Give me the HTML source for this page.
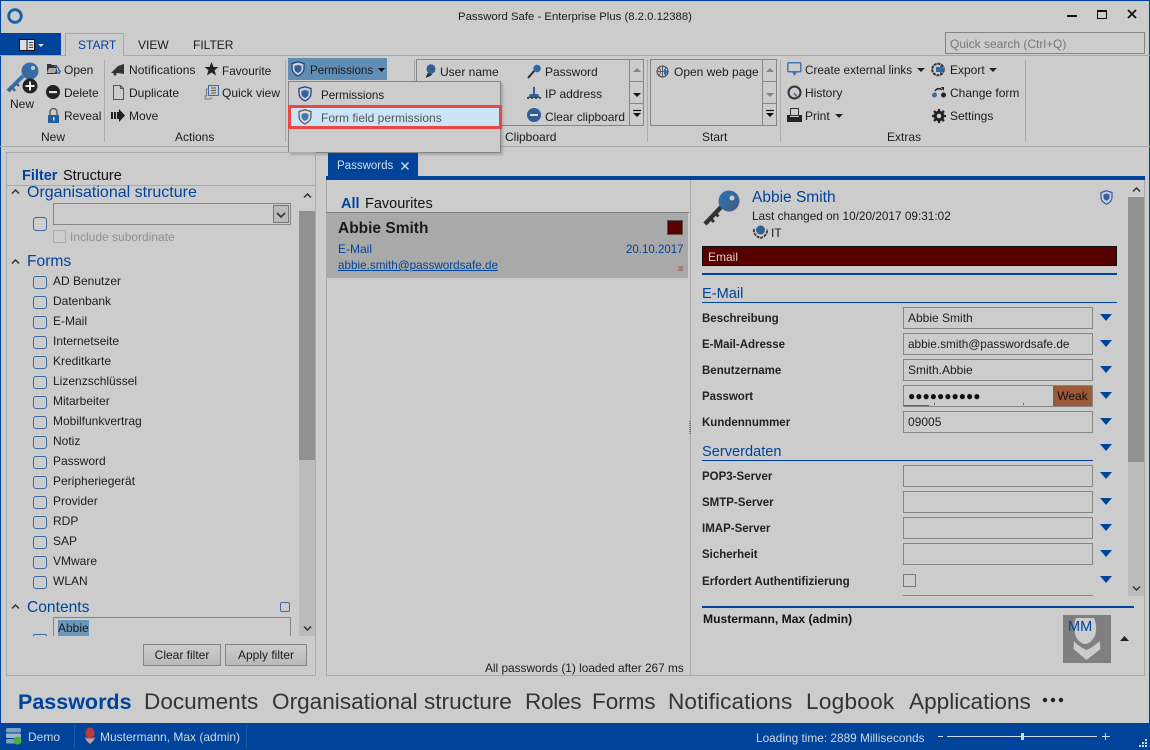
<!DOCTYPE html>
<html><head><meta charset="utf-8"><title>Password Safe</title>
<style>
html,body{margin:0;padding:0;width:1150px;height:750px;overflow:hidden;background:#ccc}
body{position:relative;font-family:"Liberation Sans",sans-serif;font-size:12px;color:#1c1c1c}
.t{position:absolute;white-space:nowrap;line-height:16px}
.b{position:absolute;box-sizing:border-box}
svg{position:absolute;overflow:visible}
.blue{color:#00439a}
.h{font-size:15.6px;color:#00439a;line-height:18px}
.cb{position:absolute;box-sizing:border-box;width:14px;height:13px;border:1.5px solid #3d6a9c;border-radius:3px}
.inp{position:absolute;box-sizing:border-box;left:903px;width:190px;height:22px;border:1px solid #858585;padding-left:4px;line-height:20px;white-space:nowrap}
.lab{position:absolute;left:702px;line-height:16px;font-weight:bold;font-size:11.5px;color:#222;white-space:nowrap}
.nav{position:absolute;top:687px;font-size:22.6px;line-height:30px;color:#33333a;white-space:nowrap}
.tri{position:absolute;left:1100px;width:0;height:0;border-left:6px solid transparent;border-right:6px solid transparent;border-top:7px solid #00439a}
.sep{position:absolute;width:1px;top:60px;height:82px;background:#aaa}
</style></head><body>

<!-- window frame -->
<div class="b" style="left:0;top:0;width:1150px;height:1px;background:#00439a"></div>
<div class="b" style="left:0;top:0;width:1px;height:750px;background:#00439a"></div>
<div class="b" style="left:1149px;top:0;width:1px;height:750px;background:#00439a"></div>

<svg style="left:7px;top:8px" width="16" height="16"><circle cx="8" cy="8" r="6.300" fill="none" stroke="#1b5f9c" stroke-width="2.800"/></svg>
<div class="t" style="left:458px;top:9px;font-size:11.35px">Password Safe - Enterprise Plus (8.2.0.12388)</div>
<div class="b" style="left:1067px;top:15px;width:10px;height:2px;background:#111"></div>
<div class="b" style="left:1097px;top:10px;width:10px;height:9px;border:1px solid #111;border-top-width:2px"></div>
<svg style="left:1127px;top:9px" width="10" height="10"><path d="M1 1L9 9M9 1L1 9" stroke="#111" stroke-width="1.800"/></svg>

<!-- menu -->
<div class="b" style="left:0;top:33px;width:61px;height:22px;background:#00439a"></div>
<svg style="left:19px;top:39px" width="26" height="13"><rect x=".5" y=".5" width="15" height="11" fill="#ddd" stroke="#111"/><path d="M8 .5V11.500" stroke="#111"/><path d="M10 3.500h4M10 6h4M10 8.500h4" stroke="#111" stroke-width=".8"/><path d="M19 5h6l-3 3z" fill="#ddd"/></svg>
<div class="b" style="left:0;top:55px;width:1150px;height:1px;background:#a8a8a8"></div>
<div class="b" style="left:65px;top:33px;width:59px;height:23px;border:1px solid #a8a8a8;border-bottom:0;background:#ccc"></div>
<div class="t blue" style="left:78px;top:37px">START</div>
<div class="t" style="left:138px;top:37px">VIEW</div>
<div class="t" style="left:193px;top:37px">FILTER</div>
<div class="b" style="left:945px;top:32px;width:200px;height:22px;border:1px solid #858585"></div>
<div class="t" style="left:950px;top:36px;color:#777">Quick search (Ctrl+Q)</div>
<div class="b" style="left:0;top:146px;width:1150px;height:1px;background:#a8a8a8"></div>

<!-- ribbon separators -->
<div class="sep" style="left:104px"></div><div class="sep" style="left:285px"></div><div class="sep" style="left:414px"></div>
<div class="sep" style="left:647px"></div><div class="sep" style="left:780px"></div><div class="sep" style="left:1025px"></div>

<!-- New group -->
<svg style="left:7px;top:62px" width="32" height="34"><defs><linearGradient id="k" x1="0" y1="1" x2="1" y2="0"><stop offset="0" stop-color="#40648c"/><stop offset="1" stop-color="#2f74bb"/></linearGradient></defs><path d="M1 29L16 14" stroke="url(#k)" stroke-width="4"/><path d="M5 25l3 4M9 21l3 3" stroke="#40648c" stroke-width="2.500"/><circle cx="23" cy="9" r="8.500" fill="url(#k)"/><circle cx="26" cy="6" r="2" fill="#ccc"/><circle cx="23" cy="24" r="7.500" fill="#222"/><path d="M23 19.500v9M18.500 24h9" stroke="#eee" stroke-width="2"/></svg>
<div class="t" style="left:10px;top:96px">New</div>
<svg style="left:46px;top:62px" width="15" height="15"><path d="M1 2h4l1 1h5v9H1z" fill="#333"/><path d="M3 6h8l-2 5H1z" fill="#aaa"/><path d="M8 4c3 0 5 2 5 5M10.500 9.500l2.500 2 1.500-3" fill="none" stroke="#3d6a9c" stroke-width="1.400"/></svg>
<div class="t" style="left:64px;top:62px">Open</div>
<svg style="left:46px;top:85px" width="15" height="15"><circle cx="7" cy="7" r="7" fill="#222"/><rect x="3" y="6" width="8" height="2.200" fill="#ddd"/></svg>
<div class="t" style="left:64px;top:85px">Delete</div>
<svg style="left:47px;top:108px" width="13" height="15"><path d="M3 7V4a3.500 3.500 0 0 1 7 0v3" fill="none" stroke="#555" stroke-width="1.300"/><rect x="1" y="7" width="11" height="8" fill="#1f5f9e"/><rect x="6" y="9" width="1.500" height="3.500" fill="#ddd"/></svg>
<div class="t" style="left:64px;top:108px">Reveal</div>
<div class="t" style="left:41px;top:129px">New</div>

<!-- Actions -->
<svg style="left:110px;top:63px" width="16" height="13"><path d="M1 10L8 3l6-2v10l-6-1H2z" fill="#333"/><circle cx="5" cy="11" r="1.500" fill="#333"/></svg>
<div class="t" style="left:129px;top:62px;letter-spacing:.1px">Notifications</div>
<svg style="left:204px;top:62px" width="15" height="14"><path d="M7.500 0l2 5h5l-4 3.300 1.600 5.200-4.600-3-4.600 3L4.500 8.300.5 5h5z" fill="#222"/></svg>
<div class="t" style="left:222px;top:63px;font-size:11.8px">Favourite</div>
<svg style="left:113px;top:85px" width="11" height="15"><path d="M.5.500h7l3 3v11H.5z" fill="#ccc" stroke="#555"/><path d="M7.500.500v3h3" fill="none" stroke="#555"/></svg>
<div class="t" style="left:129px;top:85px">Duplicate</div>
<svg style="left:204px;top:85px" width="15" height="15"><rect x="4.500" y=".5" width="10" height="10" fill="none" stroke="#3d6a9c"/><path d="M7 3h5M7 5.500h5M7 8h5" stroke="#555"/><path d="M4 4H2.500v7H1v3h6v-2" fill="none" stroke="#777"/></svg>
<div class="t" style="left:222px;top:85px">Quick view</div>
<svg style="left:111px;top:109px" width="14" height="13"><path d="M0 3h2v7H0zM3 3h2v7H3zM6 3h2V0l6 6.500L8 13v-3H6z" fill="#222"/></svg>
<div class="t" style="left:129px;top:108px">Move</div>
<div class="t" style="left:175px;top:129px">Actions</div>

<!-- Clipboard gallery -->
<div class="b" style="left:416px;top:59px;width:228px;height:67px;border:1px solid #858585"></div>
<div class="b" style="left:629px;top:59px;width:1px;height:67px;background:#858585"></div>
<div class="b" style="left:629px;top:81px;width:15px;height:1px;background:#858585"></div>
<div class="b" style="left:629px;top:103px;width:15px;height:1px;background:#858585"></div>
<svg style="left:424px;top:64px" width="13" height="15"><ellipse cx="7" cy="5" rx="4.500" ry="4.800" fill="#2f5f94"/><path d="M1.500 14l2-5 5 1-2 2z" fill="#333"/></svg>
<div class="t" style="left:440px;top:64px">User name</div>
<svg style="left:527px;top:64px" width="14" height="15"><path d="M1 14L8 6" stroke="#333" stroke-width="2"/><circle cx="10" cy="4.500" r="3.800" fill="#2f6aa8"/></svg>
<div class="t" style="left:545px;top:64px">Password</div>
<svg style="left:527px;top:87px" width="14" height="13"><path d="M7 0v7" stroke="#2f5f94" stroke-width="2"/><path d="M3 7h8l2 4H1z" fill="#2f5f94"/><path d="M0 11h14" stroke="#222" stroke-dasharray="2 2" stroke-width="1.500"/></svg>
<div class="t" style="left:545px;top:86px">IP address</div>
<svg style="left:527px;top:108px" width="14" height="14"><circle cx="7" cy="7" r="7" fill="#2f5f94"/><rect x="3" y="6" width="8" height="2" fill="#ddd"/></svg>
<div class="t" style="left:545px;top:109px;font-size:11.9px">Clear clipboard</div>
<svg style="left:632px;top:67px" width="10" height="50"><path d="M1 5l4-4 4 4z" fill="#858585"/><path d="M1 26h8l-4 4z" fill="#111"/><path d="M1 46h8l-4 4z" fill="#111"/><path d="M1 43.500h8" stroke="#111" stroke-width="1.200"/></svg>
<div class="t" style="left:505px;top:129px">Clipboard</div>

<!-- Start gallery -->
<div class="b" style="left:650px;top:59px;width:127px;height:67px;border:1px solid #858585"></div>
<div class="b" style="left:762px;top:59px;width:1px;height:67px;background:#858585"></div>
<div class="b" style="left:762px;top:81px;width:15px;height:1px;background:#858585"></div>
<div class="b" style="left:762px;top:103px;width:15px;height:1px;background:#858585"></div>
<svg style="left:656px;top:65px" width="14" height="14"><circle cx="6.500" cy="6.500" r="5.500" fill="#ccc" stroke="#444"/><path d="M6.500 1v11M1 6.500h11M3 2.500c2 3 2 5 0 8M10 2.500c-2 3-2 5 0 8" fill="none" stroke="#444" stroke-width=".8"/><path d="M8 4l5 3-5 3z" fill="#2f6aa8"/></svg>
<div class="t" style="left:674px;top:64px">Open web page</div>
<svg style="left:765px;top:67px" width="10" height="50"><path d="M1 5l4-4 4 4z" fill="#858585"/><path d="M1 26h8l-4 4z" fill="#858585"/><path d="M1 46h8l-4 4z" fill="#111"/><path d="M1 43.500h8" stroke="#111" stroke-width="1.200"/></svg>
<div class="t" style="left:702px;top:129px">Start</div>

<!-- Extras -->
<svg style="left:787px;top:62px" width="15" height="15"><rect x=".8" y=".8" width="13" height="9" rx="1" fill="none" stroke="#3d7ab8" stroke-width="1.500"/><path d="M5 10h5l-2.500 4z" fill="#3d7ab8"/></svg>
<div class="t" style="left:805px;top:63px;font-size:11.75px">Create external links</div>
<svg style="left:917px;top:68px" width="8" height="4"><path d="M0 0h8L4 4z" fill="#222"/></svg>
<svg style="left:787px;top:85px" width="15" height="15"><circle cx="7.500" cy="7.500" r="6" fill="none" stroke="#333" stroke-width="2"/><path d="M7 8l4 5" stroke="#3d6a9c" stroke-width="1.500"/></svg>
<div class="t" style="left:805px;top:85px">History</div>
<svg style="left:787px;top:108px" width="15" height="14"><rect x="3.500" y=".5" width="8" height="7" fill="#ccc" stroke="#333"/><path d="M0 7h3v2h9V7h3v7H0z" fill="#222"/></svg>
<div class="t" style="left:805px;top:108px">Print</div>
<svg style="left:835px;top:114px" width="8" height="4"><path d="M0 0h8L4 4z" fill="#222"/></svg>
<svg style="left:931px;top:62px" width="15" height="15"><circle cx="7" cy="7.500" r="5.800" fill="none" stroke="#333" stroke-width="2" stroke-dasharray="3 .8"/><path d="M5 5h4V3l5 4.500L9 12v-2H5z" fill="#2f6aa8"/></svg>
<div class="t" style="left:950px;top:62px">Export</div>
<svg style="left:989px;top:68px" width="8" height="4"><path d="M0 0h8L4 4z" fill="#222"/></svg>
<svg style="left:932px;top:86px" width="14" height="12"><circle cx="2.500" cy="9" r="2.500" fill="#3d6a9c"/><circle cx="11.500" cy="9" r="2.500" fill="#222"/><path d="M3 5c2-3 5-3 7-1" fill="none" stroke="#222" stroke-width="1.500"/><path d="M9 1l3 0 0 4z" fill="#222"/></svg>
<div class="t" style="left:950px;top:85px">Change form</div>
<svg style="left:932px;top:109px" width="14" height="14"><circle cx="7" cy="7" r="3.800" fill="none" stroke="#222" stroke-width="3"/><path d="M7 0v14M0 7h14M2 2l10 10M12 2L2 12" stroke="#222" stroke-width="2.300" stroke-dasharray="2.500 9 2.500 0"/></svg>
<div class="t" style="left:950px;top:108px">Settings</div>
<div class="t" style="left:887px;top:129px">Extras</div>

<!-- Permissions -->
<div class="b" style="left:288px;top:58px;width:99px;height:22px;background:#5f8db3"></div>
<svg style="left:291px;top:61px" width="14" height="16"><path d="M7 .8l6 1.700v5c0 4-3 6-6 7.500-3-1.500-6-3.500-6-7.500v-5z" fill="#ccd" stroke="#1d3f6e" stroke-width="1.200"/><path d="M7 4l3.500 1v2.500C10.500 10 9 11 7 12c-2-1-3.500-2-3.500-4.500V5z" fill="#2f5f9e"/></svg>
<div class="t" style="left:310px;top:63px;font-size:11.6px">Permissions</div>
<svg style="left:378px;top:68px" width="7" height="4"><path d="M0 0h7L3.500 4z" fill="#111"/></svg>

<div class="b" style="left:288px;top:81px;width:213px;height:72px;background:#ccc;border:1px solid #858585;box-shadow:2px 2px 2px rgba(0,0,0,.18)"></div>
<svg style="left:298px;top:86px" width="14" height="16"><path d="M7 .8l6 1.700v5c0 4-3 6-6 7.500-3-1.500-6-3.500-6-7.500v-5z" fill="#ccd" stroke="#1d3f6e" stroke-width="1.200"/><path d="M7 4l3.500 1v2.500C10.500 10 9 11 7 12c-2-1-3.500-2-3.500-4.500V5z" fill="#2f5f9e"/></svg>
<div class="t" style="left:321px;top:88px;font-size:11.6px">Permissions</div>
<div class="b" style="left:288px;top:105px;width:214px;height:24px;background:#cce4f7;border:3px solid #e8483f"></div>
<svg style="left:298px;top:109px" width="14" height="16"><path d="M7 .8l6 1.700v5c0 4-3 6-6 7.500-3-1.500-6-3.500-6-7.500v-5z" fill="#ddd" stroke="#555" stroke-width="1.200"/><path d="M7 4l3.500 1v2.500C10.500 10 9 11 7 12c-2-1-3.500-2-3.500-4.500V5z" fill="#3d78bb"/></svg>
<div class="t" style="left:321px;top:110px;color:#555">Form field permissions</div>

<!-- Left panel -->
<div class="b" style="left:6px;top:152px;width:310px;height:524px;border:1px solid #aaa"></div>
<div class="b" style="left:7px;top:185px;width:308px;height:1px;background:#aaa"></div>
<div class="t" style="left:22px;top:167px;font-size:14.500px;font-weight:bold;color:#00439a;line-height:18px">Filter</div>
<div class="t" style="left:63px;top:167px;font-size:14.500px;color:#111;line-height:18px">Structure</div>

<div class="b" style="left:299px;top:186px;width:16px;height:450px;background:#bbb"></div>
<div class="b" style="left:299px;top:186px;width:16px;height:25px;background:#ccc"></div>
<div class="b" style="left:299px;top:211px;width:16px;height:249px;background:#909090"></div>
<svg style="left:303px;top:193px" width="9" height="5"><path d="M1 4.500L4.500 1 8 4.500" fill="none" stroke="#333" stroke-width="1.500"/></svg>
<svg style="left:303px;top:626px" width="9" height="5"><path d="M1 .5L4.500 4 8 .5" fill="none" stroke="#333" stroke-width="1.500"/></svg>

<svg style="left:11px;top:189px" width="9" height="5"><path d="M1 4.500L4.500 1 8 4.500" fill="none" stroke="#333" stroke-width="1.500"/></svg>
<div class="t h" style="left:27px;top:185px;font-size:16px;line-height:15px;height:15px">Organisational structure</div>
<div class="cb" style="left:33px;top:217px;height:14px"></div>
<div class="b" style="left:53px;top:203px;width:238px;height:22px;border:1px solid #858585"></div>
<div class="b" style="left:273px;top:205px;width:16px;height:18px;border:1px solid #777;background:#bbb"></div>
<svg style="left:276px;top:212px" width="10" height="6"><path d="M1 1l4 4 4-4" fill="none" stroke="#333" stroke-width="1.600"/></svg>
<div class="b" style="left:53px;top:230px;width:13px;height:13px;border:1px solid #aaa"></div>
<div class="t" style="left:70px;top:229px;color:#8f8f8f">Include subordinate</div>

<svg style="left:11px;top:259px" width="9" height="5"><path d="M1 4.500L4.500 1 8 4.500" fill="none" stroke="#333" stroke-width="1.500"/></svg>
<div class="t h" style="left:27px;top:253px">Forms</div>

<div class="cb" style="left:33px;top:276px"></div><div class="t" style="left:53px;top:273px">AD Benutzer</div>
<div class="cb" style="left:33px;top:296px"></div><div class="t" style="left:53px;top:293px">Datenbank</div>
<div class="cb" style="left:33px;top:316px"></div><div class="t" style="left:53px;top:313px">E-Mail</div>
<div class="cb" style="left:33px;top:336px"></div><div class="t" style="left:53px;top:333px">Internetseite</div>
<div class="cb" style="left:33px;top:356px"></div><div class="t" style="left:53px;top:353px">Kreditkarte</div>
<div class="cb" style="left:33px;top:376px"></div><div class="t" style="left:53px;top:373px">Lizenzschlüssel</div>
<div class="cb" style="left:33px;top:396px"></div><div class="t" style="left:53px;top:393px">Mitarbeiter</div>
<div class="cb" style="left:33px;top:416px"></div><div class="t" style="left:53px;top:413px">Mobilfunkvertrag</div>
<div class="cb" style="left:33px;top:436px"></div><div class="t" style="left:53px;top:433px">Notiz</div>
<div class="cb" style="left:33px;top:456px"></div><div class="t" style="left:53px;top:453px">Password</div>
<div class="cb" style="left:33px;top:476px"></div><div class="t" style="left:53px;top:473px">Peripheriegerät</div>
<div class="cb" style="left:33px;top:496px"></div><div class="t" style="left:53px;top:493px">Provider</div>
<div class="cb" style="left:33px;top:516px"></div><div class="t" style="left:53px;top:513px">RDP</div>
<div class="cb" style="left:33px;top:536px"></div><div class="t" style="left:53px;top:533px">SAP</div>
<div class="cb" style="left:33px;top:556px"></div><div class="t" style="left:53px;top:553px">VMware</div>
<div class="cb" style="left:33px;top:576px"></div><div class="t" style="left:53px;top:573px">WLAN</div>

<svg style="left:11px;top:604px" width="9" height="5"><path d="M1 4.500L4.500 1 8 4.500" fill="none" stroke="#333" stroke-width="1.500"/></svg>
<div class="t h" style="left:27px;top:599px">Contents</div>
<div class="b" style="left:280px;top:602px;width:10px;height:10px;border:1px solid #3d6a9c;border-radius:2px"></div>
<div class="b" style="left:53px;top:617px;width:238px;height:19px;border:1px solid #858585;border-bottom:0"></div>
<div class="b" style="left:58px;top:620px;width:31px;height:16px;background:#6a97bb"></div>
<div class="t" style="left:58px;top:620px">Abbie</div>
<div class="b" style="left:33px;top:634px;width:14px;height:2px;border:1.500px solid #3d6a9c;border-bottom:0;border-radius:3px 3px 0 0"></div>

<div class="b" style="left:143px;top:644px;width:78px;height:22px;border:1px solid #858585;background:linear-gradient(#ccc,#b9b9b9);text-align:center;line-height:20px">Clear filter</div>
<div class="b" style="left:225px;top:644px;width:82px;height:22px;border:1px solid #858585;background:linear-gradient(#ccc,#b9b9b9);text-align:center;line-height:20px">Apply filter</div>

<!-- Tab & centre -->
<div class="b" style="left:328px;top:153px;width:90px;height:24px;background:#00439a"></div>
<div class="t" style="left:337px;top:158px;color:#d5dfe9;font-size:11.500px">Passwords</div>
<svg style="left:401px;top:162px" width="8" height="8"><path d="M.5.5l7 7M7.500.5l-7 7" stroke="#d5dfe9" stroke-width="1.300"/></svg>
<div class="b" style="left:326px;top:176px;width:819px;height:4px;background:#00439a"></div>
<div class="b" style="left:326px;top:180px;width:819px;height:496px;border:1px solid #aaa;border-top:0"></div>

<div class="t" style="left:341px;top:195px;font-size:14.500px;font-weight:bold;color:#00439a;line-height:18px">All</div>
<div class="t" style="left:365px;top:195px;font-size:14.500px;color:#111;line-height:18px">Favourites</div>
<div class="b" style="left:326px;top:212px;width:363px;height:1px;background:#808080"></div>
<div class="b" style="left:326px;top:213px;width:362px;height:65px;background:#a9a9a9"></div>
<div class="t" style="left:338px;top:220px;font-size:15.500px;font-weight:bold;line-height:18px;color:#1a1a1a">Abbie Smith</div>
<div class="b" style="left:667px;top:220px;width:16px;height:15px;background:#5a0000;border:1px solid #555"></div>
<div class="t blue" style="left:338px;top:241px">E-Mail</div>
<div class="t blue" style="left:626px;top:242px;font-size:11.500px">20.10.2017</div>
<div class="t blue" style="left:338px;top:258px;text-decoration:underline;font-size:11.7px">abbie.smith@passwordsafe.de</div>
<div class="b" style="left:678px;top:266px;width:5px;height:5px;background:#a88070"></div>
<div class="t" style="left:485px;top:660px;font-size:11.85px">All passwords (1) loaded after 267 ms</div>

<div class="b" style="left:690px;top:180px;width:1px;height:495px;background:#aaa"></div>
<div class="b" style="left:689px;top:421px;width:2px;height:14px;background:repeating-linear-gradient(#777 0 1px,transparent 1px 2px)"></div>

<!-- Detail -->
<svg style="left:703px;top:190px" width="38" height="38"><defs><linearGradient id="k2" x1="0" y1="0" x2="1" y2="1"><stop offset="0" stop-color="#2f74bb"/><stop offset="1" stop-color="#40587a"/></linearGradient></defs><path d="M2 34L20 15" stroke="#333" stroke-width="4.500"/><path d="M7 28l4 4M12 23l3.500 3.500" stroke="#333" stroke-width="3"/><circle cx="26" cy="11" r="10.500" fill="url(#k2)"/><circle cx="29" cy="8" r="2.500" fill="#ccc"/></svg>
<div class="t blue" style="left:752px;top:189px;font-size:15.500px;line-height:18px">Abbie Smith</div>
<div class="t" style="left:752px;top:208px;font-size:11.8px">Last changed on 10/20/2017 09:31:02</div>
<svg style="left:753px;top:225px" width="15" height="14"><circle cx="7.500" cy="5" r="4.500" fill="#2f5f94"/><path d="M1 4c-1 5 3 8 6.500 9C11 12 15 9 14 4" fill="none" stroke="#333" stroke-width="1.800" stroke-dasharray="3 1"/></svg>
<div class="t" style="left:771px;top:225px">IT</div>
<svg style="left:1100px;top:190px" width="13" height="15"><path d="M6.500.8l5.500 1.700v5c0 3.500-3 5.500-5.500 6.700C4 13 1 11 1 7.500v-5z" fill="#ccd" stroke="#2f5f9e" stroke-width="1.200"/><path d="M6.500 3.500l3 1v2.500c0 2-1.500 3-3 3.800-1.500-.8-3-1.800-3-3.800V4.500z" fill="#2f5f9e"/></svg>
<div class="b" style="left:702px;top:246px;width:415px;height:20px;background:#570000;border:1px solid #111"></div>
<div class="t" style="left:708px;top:249px;color:#e0cccc">Email</div>
<div class="b" style="left:702px;top:273px;width:415px;height:2px;background:#00439a"></div>
<div class="t h" style="left:702px;top:285px;font-size:14.6px">E-Mail</div>
<div class="b" style="left:702px;top:302px;width:415px;height:1px;background:#00439a"></div>

<div class="lab" style="top:311px">Beschreibung</div><div class="inp" style="top:307px">Abbie Smith</div><div class="tri" style="top:314px"></div>
<div class="lab" style="top:337px">E-Mail-Adresse</div><div class="inp" style="top:333px;font-size:11.8px;line-height:21px">abbie.smith@passwordsafe.de</div><div class="tri" style="top:340px"></div>
<div class="lab" style="top:363px">Benutzername</div><div class="inp" style="top:359px">Smith.Abbie</div><div class="tri" style="top:366px"></div>
<div class="lab" style="top:389px">Passwort</div><div class="inp" style="top:385px"></div><div class="tri" style="top:392px"></div>
<div class="t" style="left:908px;top:388px;font-size:12px;color:#111">●●●●●●●●●●</div>
<div class="b" style="left:1053px;top:386px;width:39px;height:20px;background:#9c5a38;text-align:center;line-height:20px;color:#111">Weak</div>
<div class="b" style="left:904px;top:405px;width:25px;height:1px;background:#b04030"></div>
<div class="b" style="left:934px;top:403px;width:1px;height:2px;background:#666"></div>
<div class="b" style="left:1023px;top:403px;width:1px;height:2px;background:#666"></div>
<div class="lab" style="top:415px">Kundennummer</div><div class="inp" style="top:411px">09005</div><div class="tri" style="top:418px"></div>

<div class="t h" style="left:702px;top:443px;font-size:14.6px">Serverdaten</div>
<div class="tri" style="top:444px"></div>
<div class="b" style="left:702px;top:460px;width:391px;height:1px;background:#00439a"></div>
<div class="lab" style="top:469px">POP3-Server</div><div class="inp" style="top:465px"></div><div class="tri" style="top:472px"></div>
<div class="lab" style="top:495px">SMTP-Server</div><div class="inp" style="top:491px"></div><div class="tri" style="top:498px"></div>
<div class="lab" style="top:521px">IMAP-Server</div><div class="inp" style="top:517px"></div><div class="tri" style="top:524px"></div>
<div class="lab" style="top:547px">Sicherheit</div><div class="inp" style="top:543px"></div><div class="tri" style="top:550px"></div>
<div class="lab" style="top:574px;font-size:11.6px">Erfordert Authentifizierung</div>
<div class="b" style="left:903px;top:574px;width:13px;height:13px;border:1px solid #777"></div><div class="tri" style="top:576px"></div>
<div class="b" style="left:903px;top:595px;width:190px;height:1px;background:#858585"></div>

<div class="b" style="left:1128px;top:181px;width:16px;height:415px;background:#bbb"></div>
<div class="b" style="left:1128px;top:181px;width:16px;height:16px;background:#ccc"></div>
<div class="b" style="left:1128px;top:197px;width:16px;height:265px;background:#909090"></div>
<svg style="left:1132px;top:187px" width="9" height="5"><path d="M1 4.500L4.500 1 8 4.500" fill="none" stroke="#333" stroke-width="1.500"/></svg>
<svg style="left:1132px;top:586px" width="9" height="5"><path d="M1 .5L4.500 4 8 .5" fill="none" stroke="#333" stroke-width="1.500"/></svg>

<div class="b" style="left:702px;top:606px;width:432px;height:2px;background:#00439a"></div>
<div class="t" style="left:703px;top:611px;font-weight:bold;font-size:12.1px;color:#111">Mustermann, Max (admin)</div>
<div class="b" style="left:1063px;top:615px;width:48px;height:48px;background:#7f7f7f"></div>
<svg style="left:1063px;top:615px" width="48" height="48"><path d="M13 3h18c3 7 3 16-1 21-2 3-5 5-8 5s-5-2-7-4c-4-5-5-15-2-22z" fill="#ccc"/><path d="M11 26c3 4 8 7 12.500 9 4.500-2 9-5 13-9l1 8-14 11-13-11z" fill="#ccc"/></svg>
<div class="t blue" style="left:1068px;top:619px;font-size:14.500px">MM</div>
<svg style="left:1120px;top:636px" width="9" height="5"><path d="M0 5L4.500 0 9 5z" fill="#222"/></svg>

<!-- Nav -->
<div class="nav" style="left:18px;font-weight:bold;font-size:21.500px;color:#00439a">Passwords</div>
<div class="nav" style="left:144px">Documents</div>
<div class="nav" style="left:272px">Organisational structure</div>
<div class="nav" style="left:525px;letter-spacing:-.3px">Roles</div>
<div class="nav" style="left:592px;letter-spacing:-.1px">Forms</div>
<div class="nav" style="left:668px;letter-spacing:.1px">Notifications</div>
<div class="nav" style="left:806px;letter-spacing:.25px">Logbook</div>
<div class="nav" style="left:909px">Applications</div>
<svg style="left:1042px;top:697px" width="22" height="6"><circle cx="3" cy="3" r="2.200" fill="#222"/><circle cx="11" cy="3" r="2.200" fill="#222"/><circle cx="19" cy="3" r="2.200" fill="#222"/></svg>

<!-- Status bar -->
<div class="b" style="left:0;top:723px;width:1150px;height:27px;background:#00439a"></div>
<svg style="left:5px;top:727px" width="17" height="18"><rect x="1" y="1" width="15" height="4.500" rx="1.500" fill="#7f9fbf"/><rect x="1" y="6.500" width="15" height="4.500" rx="1.500" fill="#9fb5cc"/><rect x="1" y="12" width="15" height="4.500" rx="1.500" fill="#7f9fbf"/><circle cx="12.500" cy="13.500" r="4" fill="#4caf3a"/></svg>
<div class="t" style="left:28px;top:729px;color:#cfd9e4">Demo</div>
<div class="b" style="left:74px;top:725px;width:1px;height:23px;background:#1a5a9e"></div>
<svg style="left:84px;top:727px" width="12" height="18"><ellipse cx="6" cy="6" rx="4.500" ry="5.500" fill="#c03a3a"/><path d="M1 10c1 4 3 5 5 7 2-2 4-3 5-7-2 2-8 2-10 0z" fill="#c9a0a0"/></svg>
<div class="t" style="left:100px;top:729px;color:#cfd9e4">Mustermann, Max (admin)</div>
<div class="b" style="left:246px;top:725px;width:1px;height:23px;background:#1a5a9e"></div>
<div class="t" style="left:756px;top:730px;color:#cfd9e4;font-size:11.85px">Loading time: 2889 Milliseconds</div>
<div class="b" style="left:938px;top:736px;width:5px;height:1px;background:#cfd9e4"></div>
<div class="b" style="left:947px;top:736px;width:150px;height:1px;background:#cfd9e4"></div>
<div class="b" style="left:1021px;top:733px;width:3px;height:7px;background:#cfd9e4"></div>
<div class="b" style="left:1102px;top:736px;width:8px;height:1px;background:#cfd9e4"></div>
<div class="b" style="left:1105px;top:733px;width:1px;height:7px;background:#cfd9e4"></div>
<svg style="left:1139px;top:739px" width="9" height="9"><g fill="#cfd9e4"><rect x="6" y="0" width="2" height="2"/><rect x="3" y="3" width="2" height="2"/><rect x="6" y="3" width="2" height="2"/><rect x="0" y="6" width="2" height="2"/><rect x="3" y="6" width="2" height="2"/><rect x="6" y="6" width="2" height="2"/></g></svg>

</body></html>
